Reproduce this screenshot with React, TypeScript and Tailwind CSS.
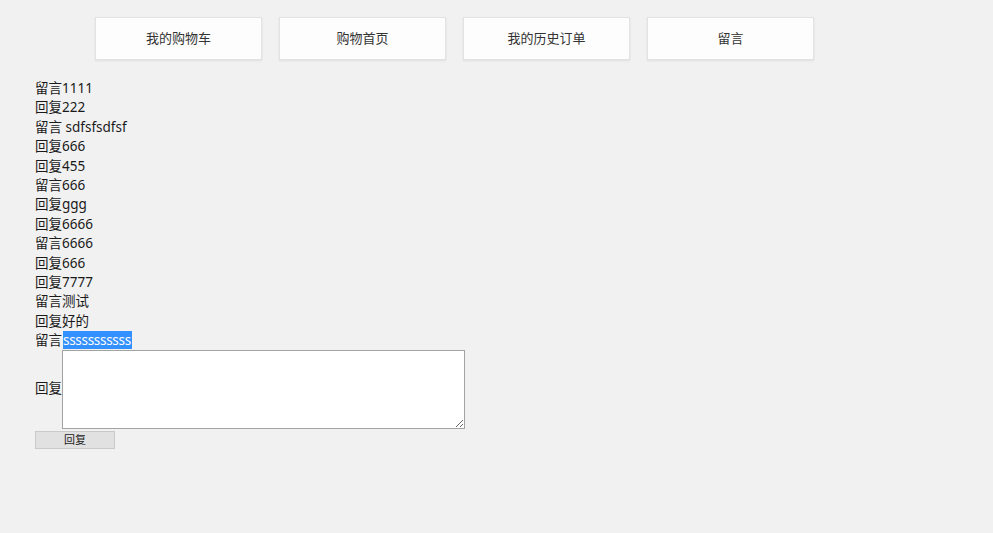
import React from "react";

const items: [string, string][] = [
  ["留言", "1111"],
  ["回复", "222"],
  ["留言", " sdfsfsdfsf"],
  ["回复", "666"],
  ["回复", "455"],
  ["留言", "666"],
  ["回复", "ggg"],
  ["回复", "6666"],
  ["留言", "6666"],
  ["回复", "666"],
  ["回复", "7777"],
  ["留言", "测试"],
  ["回复", "好的"],
];

const navs = ["我的购物车", "购物首页", "我的历史订单", "留言"];

export default function App() {
  return (
    <div
      className="w-[993px] h-[533px] bg-[#f1f1f1] text-[#1a1a1a] overflow-hidden"
      style={{ fontFamily: '"Noto Sans", "Noto Sans CJK SC", sans-serif' }}
    >
      <div className="flex gap-[17px] pl-[95px] pt-[17px]">
        {navs.map((n) => (
          <div
            key={n}
            className="w-[167px] h-[43px] flex items-center justify-center bg-[#fdfdfd] border border-[#e2e2e2] shadow-[0_1px_2px_rgba(0,0,0,0.08)] text-[13px] text-[#333]"
          >
            {n}
          </div>
        ))}
      </div>
      <div className="pl-[35px] pt-[19px] text-[13.5px] leading-[19.4px]">
        {items.map(([a, b], i) => (
          <div key={i} className="whitespace-pre">
            {a}
            {b}
          </div>
        ))}
        <div className="whitespace-pre">
          留言<span className="bg-[#3390ff] text-white ml-[1px] pr-[1px] tracking-[-0.3px]">sssssssssss</span>
        </div>
        <div className="flex items-center mt-[-1px]">
          <span>回复</span>
          <textarea className="w-[403px] h-[79px] bg-white border border-[#a3a3a3] resize" />
        </div>
        <button className="mt-[2px] w-[80px] h-[18px] bg-[#e1e1e1] border border-[#c9c9c9] text-[11px] leading-[16px] text-[#222] flex items-center justify-center">
          回复
        </button>
      </div>
    </div>
  );
}
